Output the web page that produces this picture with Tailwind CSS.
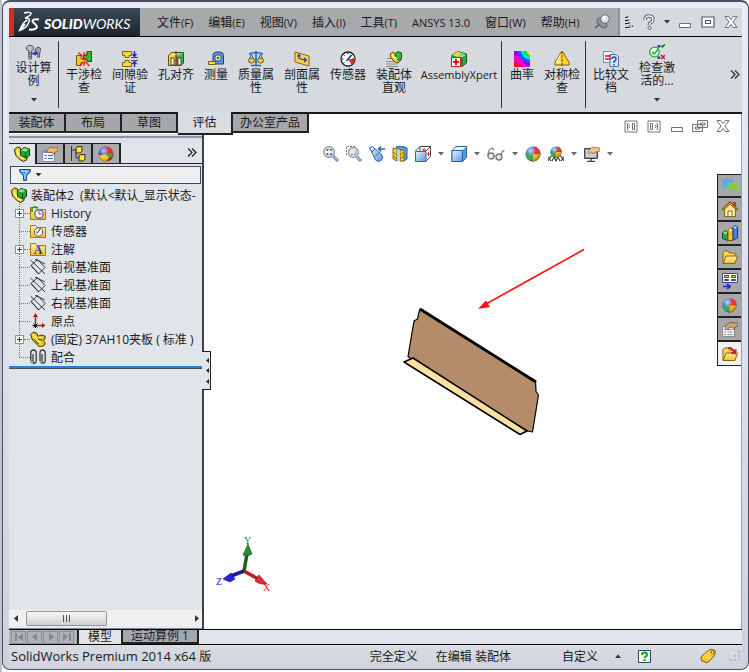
<!DOCTYPE html>
<html lang="zh-CN">
<head>
<meta charset="utf-8">
<title>SolidWorks Premium 2014</title>
<script src="https://cdn.jsdelivr.net/npm/@tailwindcss/browser@4"></script>
</head>
<body class="h-screen overflow-hidden bg-white font-['Open_Sans','Noto_Sans_CJK_SC',sans-serif] text-[12px] leading-[13px] text-[#1a1a1a]">
<svg class="absolute size-0" aria-hidden="true">
  <defs>
    <linearGradient id="gGlass" x1="0" y1="0" x2="1" y2="1"><stop offset="0" stop-color="#eaf4ff"/><stop offset="1" stop-color="#5a96dc"/></linearGradient>
    <linearGradient id="gFolder" x1="0" y1="0" x2="0" y2="1"><stop offset="0" stop-color="#fff3a8"/><stop offset="1" stop-color="#f3bd2c"/></linearGradient>
    <radialGradient id="gShine" cx=".35" cy=".28" r=".75"><stop offset="0" stop-color="#fff" stop-opacity=".75"/><stop offset=".5" stop-color="#fff" stop-opacity="0"/><stop offset="1" stop-color="#000" stop-opacity=".4"/></radialGradient>
  </defs>
  <symbol id="down" viewBox="0 0 6 4"><path d="M0 0h6L3 3.5z" fill="currentColor"/></symbol>
  <symbol id="part" viewBox="0 0 16 16"><path d="M.5 3.500L4 1l3 1.500 1 3 3-1.500 4 1v3l-2 1.500 2 2v2l-3.500 2.500-3-1-6-6z" fill="#e8c31a" stroke="#3c3000"/><path d="M2 4l2.500 1L7 9l4 3.500M8.500 6l3 1" fill="none" stroke="#fff38a" stroke-width="1.500"/><path d="M4.500 8.500l4 4.500M8 8l4 1" stroke="#3c3000" fill="none"/></symbol>
  <symbol id="asm" viewBox="0 0 16 16"><path d="M.5 3.500L3.500 1l3 1 .5 4 3 4 3 1v2.500l-3.500 2-3-1.500-5-5z" fill="#f0cc26" stroke="#2f2500"/><path d="M2.500 4l2 4.500L9.500 13" stroke="#fff7a0" stroke-width="1.500" fill="none"/><path d="M6.500 4.500l3.500-3 5.500 1.500v6.500L12 12l-5.500-2.500z" fill="#23a637" stroke="#064d12"/><path d="M7 4.500L10.200 2l4.300 1.200L11.500 5.500z" fill="#86ec86"/><path d="M11.500 6v5" stroke="#064d12"/></symbol>
  <symbol id="ball" viewBox="0 0 16 16"><circle cx="8" cy="8" r="7.500" fill="#2c6ae0"/><path d="M8 8L9.500.600A7.500 7.500 0 0 1 15.500 8z" fill="#ec2a24"/><path d="M8 8h7.500A7.500 7.500 0 0 1 8 15.500z" fill="#f3b81c"/><path d="M8 8v7.500A7.500 7.500 0 0 1 .5 8z" fill="#2fa944"/><circle cx="8" cy="8" r="7.500" fill="url(#gShine)"/></symbol>
  <symbol id="ball2" viewBox="0 0 16 16"><circle cx="8" cy="8" r="7.500" fill="#e5261c"/><path d="M1 5Q4 0 8 .5q2 4-1 8Q3 10 .6 9z" fill="#2a45d0"/><path d="M.6 9Q4 9.500 7 8l4 3-2 4.500Q3 15.500.6 9z" fill="#f7cf1d"/><path d="M7 8q4-1 8.500 0-.5 2-1.500 4z" fill="#34b03c"/><circle cx="8" cy="8" r="7.500" fill="url(#gShine)"/></symbol>
  <symbol id="prop" viewBox="0 0 16 16"><path d="M.5 4.500h12v11H.5z" fill="#eef2fa" stroke="#8492ad"/><path d="M1 5h11v2H1z" fill="#7d92c8"/><path d="M2.500 9.500h2M2.500 12.500h2M6 9.500h5M6 12.500h5" stroke="#4668b4"/><path d="M4 5l4-3.500 8 .5v3l-3 1-1 3-1.500-3-4 .5-1-1z" fill="#f2b87a" stroke="#895022" stroke-width=".7"/></symbol>
  <symbol id="note" viewBox="0 0 16 16"><path d="M.5 5.500h12v10H.5z" fill="#f0f0f0" stroke="#8a8a8a"/><path d="M2 8.500h2M2 11h2M2 13.500h2M5.500 8.500h5M5.500 11h5M5.500 13.500h5" stroke="#999"/><path d="M3 5l5-3.500L16 2v3l-3 1-1 2.500L10.500 6l-3 .5L6 9 4 8z" fill="#cfa67c" stroke="#6b4424" stroke-width=".7"/></symbol>
  <symbol id="conf" viewBox="0 0 16 16"><path d="M1.500 0v15M1.500 4h5M6 4v8h4" fill="none" stroke="#333"/><path d="M6 2l2-1.500h4V5l-2 2H6zM9 10l2-1.500h4V13l-2 2H9z" fill="#f7d52c" stroke="#3b3000"/><path d="M7 3h3v3M10 11h3v3" fill="none" stroke="#fffbb0"/></symbol>
  <symbol id="funnel" viewBox="0 0 12 12"><path d="M.5.5h11v2L7.500 7v4.500h-3V7L.5 2.500z" fill="#4c9be8" stroke="#134d92"/><path d="M2 2h7L6 5.500V10" stroke="#c8e6ff" fill="none"/></symbol>
  <symbol id="folder" viewBox="0 0 16 16"><path d="M.5 2.500h5l1.500 2h8.500v10H.5z" fill="url(#gFolder)" stroke="#a87708"/></symbol>
  <symbol id="plane" viewBox="0 0 16 16"><path d="M1 6.500L7.500.500 15 8.500 8.500 15zM.5 1l14.500 14M5 0l10 5M1 6.500L9 15" fill="none" stroke="#222" stroke-width=".9"/></symbol>
  <symbol id="origin" viewBox="0 0 16 16"><path d="M5.500 13V2M6 12.500h7" stroke="#b01818" stroke-width="1.400"/><path d="M3 4l2.500-4L8 4zM12 10l3.500 2.500L12 15z" fill="#b01818"/><path d="M3.500 10.500l4 4M3.500 14.500l4-4M2.500 12.500h3v2.500" stroke="#111" fill="none"/></symbol>
  <symbol id="mates" viewBox="0 0 16 16"><path d="M.8 12V4Q1 1 3.500 1T6.200 4v8q0 2-1.500 2T3 12V5M10 12V4q0-3 2.500-3T15.200 4v8q0 2-1.500 2T12 12V5" fill="none" stroke="#3a3a3a" stroke-width="1.300"/><path d="M.8 12q.2 3 3.500 3M10 12q0 3 3 3" stroke="#777" fill="none"/></symbol>
  <symbol id="close" viewBox="0 0 16 16"><path d="M2 2.500h3.700L8 5.500l2.300-3H14L10 8l4 5.500h-3.700L8 10.500l-2.300 3H2L6 8z" fill="#fff" stroke="#6b7079"/></symbol>
  <symbol id="mini" viewBox="0 0 16 16"><path d="M2.500 9.500h11v4h-11z" fill="#fff" stroke="#6b7079"/></symbol>
  <symbol id="bolts" viewBox="0 0 16 16"><path d="M.5 2l2-1.500h4L8 2v3L6 6v9H3V6L.5 5z" fill="#b9bcc2" stroke="#555"/><path d="M3 8h3M3 10h3M3 12h3" stroke="#555"/><path d="M10 4l2-1.500h2L16 4v3l-1.500.8V13h-2V8L10 7z" fill="#9aa0a8" stroke="#555"/><path d="M6 9h5M9 7l2.500 2L9 11" stroke="#1530c8" fill="none" stroke-width="1.500"/></symbol>
  <symbol id="interf" viewBox="0 0 16 16"><path d="M.5 4.500H5v3h4v4H5v3H.5z" fill="#f5c81e" stroke="#7b5900"/><path d="M11 .5h4.500v10H11V8H7.500V4H11z" fill="#2dba3c" stroke="#0b5b15"/><path d="M8 1v4M2.500 1.500l4 4M9.500 5L12 1.500M8 15v-4M4 14.500l3-3.500M13.500 15L9.500 11M6 8h4" stroke="#e31616" stroke-width="1.300"/></symbol>
  <symbol id="clear" viewBox="0 0 16 16"><path d="M.5.5h9v4H7v2H3v-2H.5zM.5 15.500h9v-4H7v-2H3v2H.5z" fill="#ffd73a" stroke="#86620a"/><path d="M9 6.500h7M9 9.500h7" stroke="#444"/><path d="M12.500 0v5M12.500 16v-5M10.500 3l2 2.500 2-2.500M10.500 13l2-2.500 2 2.500" stroke="#1a28c8" fill="none" stroke-width="1.400"/></symbol>
  <symbol id="hole" viewBox="0 0 16 16"><path d="M.5 4.500L4 1.500h11.500V12L13 14.500H.5z" fill="#2eb63c" stroke="#245e10"/><path d="M.5 4.500L4 1.500h4v13H.5z" fill="#f2cf33" stroke="#6a5200"/><path d="M1 4.500L4 2h11l-3 2.500z" fill="#fff" fill-opacity=".4"/><path d="M3 7v7h3V7zM10 7v7h3V7z" fill="#fff" stroke="#444"/><path d="M8 0v16" stroke="#b31212" stroke-dasharray="3 1"/></symbol>
  <symbol id="measure" viewBox="0 0 16 16"><path d="M5 4q0-3 4-3h3q3.500 0 3.500 4v8H5z" fill="#5c98de" stroke="#1b427e"/><path d="M.5 10.500h7v3h-7z" fill="#fbd83c" stroke="#7c5d0b"/><circle cx="10" cy="7" r="3.300" fill="#f6e9a8" stroke="#1b427e"/><circle cx="10" cy="7" r="1.300" fill="#2d62ae"/></symbol>
  <symbol id="mass" viewBox="0 0 16 16"><path d="M8 0v14M1 3q7-3 14 0M3 14.500h10" stroke="#2469c4" stroke-width="1.600" fill="none"/><path d="M3.500 3L1 9h5zM12.500 3L10 9h5z" fill="none" stroke="#2469c4"/><ellipse cx="3.500" cy="9.500" rx="3" ry="2.500" fill="#f5cb45" stroke="#6c5514"/><ellipse cx="12.500" cy="9.500" rx="3" ry="2.500" fill="#f5cb45" stroke="#6c5514"/></symbol>
  <symbol id="section" viewBox="0 0 16 16"><path d="M1 1l14 4v10L1 11z" fill="#f8d447" stroke="#86670e"/><path d="M5 8V4M3.500 5.500L5 3.500l1.500 2M5 7.500l6 1.500M10 7l2.500 2.300L10 11" stroke="#1f35b5" fill="none" stroke-width="1.200"/></symbol>
  <symbol id="gauge" viewBox="0 0 16 16"><circle cx="8" cy="8" r="7" fill="#fff" stroke="#222" stroke-width="1.300"/><path d="M8 8h6.500q0 4-3 5.700z" fill="#e6342a"/><path d="M8 1.500v2M1.500 8h2M3.300 3.300L4.700 4.700M12.700 3.300l-1.400 1.400M3.500 12.500l1-1M14 8h-2" stroke="#222"/><path d="M6.500 10l5-6" stroke="#1745b5" stroke-width="1.800"/></symbol>
  <symbol id="visual" viewBox="0 0 16 16"><path d="M1 7.500h5M0 10.500h9M0 13h11M0 15.500h12" stroke="#888"/><path d="M4 3l3-2 3 2 5 3v3l-3 3-3-1-4-4z" fill="#f4cb2a" stroke="#604b00"/><path d="M9 3l3-2.500 3.500 1.500v5L13 9.500 9 7z" fill="#2fb943" stroke="#0c5818"/><path d="M6 3.500l5 5" stroke="#fff7aa" stroke-width="1.500"/></symbol>
  <symbol id="xpert" viewBox="0 0 16 16"><path d="M1 4l6-3.500 8.500 2.500v9L11 15.500 1 12z" fill="#2cad43" stroke="#0e5a1b"/><path d="M1 4l6-3.500 4 1.500-4 4z" fill="#f4d641"/><path d="M7 6l4-4 4 1.500-4 3z" fill="#7de28a"/><path d="M11 6.500v8" stroke="#0e5a1b"/><path d="M.5 6.500h9v9h-9z" fill="#fff" stroke="#d11515"/><path d="M5 8v6M2 11h6" stroke="#e01414" stroke-width="2"/></symbol>
  <symbol id="rain" viewBox="0 0 16 16"><path d="M0 0h16v16H0z" fill="#1624ff"/><path d="M0 0h7q0 5 9 8v8H0z" fill="#8a00ff"/><path d="M0 5q7-1 9 5t7 4v2H0z" fill="#f0c"/><path d="M0 11q5 0 8 5H0z" fill="#f02"/><path d="M4 0h12v12Q4 9 4 0z" fill="#1060ff"/><path d="M7 0h9v9Q8 7 7 0z" fill="#00e5f0"/><path d="M9.500 0H16v6.500Q10 5 9.500 0z" fill="#10e838"/><path d="M13 0h3v4Q13 3 13 0z" fill="#ffe600"/></symbol>
  <symbol id="symm" viewBox="0 0 16 16"><path d="M8 1q2 0 3 4l4 6v3H1v-3l4-6q1-4 3-4z" fill="#ffd52e" stroke="#8b6200"/><path d="M6.500 4L3 11h4" stroke="#fff7ae" stroke-width="1.500" fill="none"/><path d="M8 0v16" stroke="#6e3900" stroke-dasharray="3 1"/></symbol>
  <symbol id="compare" viewBox="0 0 16 16"><path d="M.5.500h8l2 2v9H.5z" fill="#f5f8fe" stroke="#7a8cae"/><path d="M7 3.500h6l2.500 2.500v9.500H7z" fill="#dce9fc" stroke="#52719f"/><path d="M2 5h6M2 8h6" stroke="#dd1515" stroke-width="1.700"/><path d="M9 8q0-2 2-2t2 2-2 2.500V12M11 13v1.500" stroke="#1848c0" fill="none" stroke-width="1.500"/></symbol>
  <symbol id="active" viewBox="0 0 16 16"><circle cx="5.500" cy="8" r="4.800" fill="#e9ffe9" stroke="#22a844" stroke-width="1.300"/><path d="M3 8l2 2 4-4.500" stroke="#14aa2f" fill="none" stroke-width="1.500"/><path d="M8.500 3.500l2-2M8.500 12.500l2 2M8.500 1.500h2v2M8.500 14.500h2v-2" stroke="#2134c8" stroke-width="1.200" fill="none"/><path d="M12 1.500L13.500 3 16 0" stroke="#087b15" fill="none" stroke-width="1.500"/><path d="M12 11l4 4M16 11l-4 4" stroke="#de1515" stroke-width="1.500"/></symbol>
  <symbol id="pin" viewBox="0 0 16 16"><path d="M7 9l-6 5" stroke="#555" stroke-width="1.400"/><ellipse cx="8" cy="9" rx="3.500" ry="6" transform="rotate(-45 8 9)" fill="#8d929b" stroke="#555a63"/><circle cx="11" cy="5" r="4.300" fill="#d9dde5" stroke="#616773"/><circle cx="10" cy="4" r="2" fill="#fff"/></symbol>
  <symbol id="zoomfit" viewBox="0 0 16 16"><path d="M10 10l5 5" stroke="#3f76b5" stroke-width="3"/><path d="M10 10l4.500 4.500" stroke="#a5cdf2" stroke-width="1.400"/><circle cx="6" cy="6" r="5.300" fill="#e8edf2" stroke="#8f959b" stroke-width="1.400"/><path d="M4 5V3.500h1.500M6.800 3.500h1.500V5M8.300 7v1.500H6.800M5.500 8.500H4V7" stroke="#333" fill="none"/></symbol>
  <symbol id="zoomarea" viewBox="0 0 16 16"><path d="M.5 9V.5h9" stroke="#777" stroke-dasharray="2 1" fill="none"/><path d="M11 11l4 4" stroke="#3f76b5" stroke-width="3"/><path d="M11 11l3.500 3.500" stroke="#a5cdf2" stroke-width="1.400"/><circle cx="7.500" cy="6.500" r="5" fill="#e4e7ea" stroke="#999ea4" stroke-width="1.300"/><path d="M5 8.500h5V4" stroke="#777" stroke-dasharray="2 1" fill="none"/></symbol>
  <symbol id="prev" viewBox="0 0 16 16"><path d="M.5 1.500l3-1L13 9q2 4-1.500 6-3 1-5-1z" fill="url(#gGlass)" stroke="#2c65a8"/><path d="M3 6l3-3M6 10.500l4-4" stroke="#2c65a8"/><path d="M16 3H10M12 .5L9.500 3 12 5.500" stroke="#2b67c0" stroke-width="1.500" fill="none"/></symbol>
  <symbol id="secview" viewBox="0 0 16 16"><path d="M4 1q6-2 11 1v11l-4 2.500V4Q7 5 4 1z" fill="#5b9be2" stroke="#235b9f"/><path d="M1 2l4 1v12l-4-2z" fill="#f8d435" stroke="#8c6500"/><path d="M8 4h4v11H8z" fill="#f8d435" stroke="#8c6500"/><path d="M1 6l4 3M1 10l4 3M8 9l4-3M8 13l4-3" stroke="#8c6500"/><path d="M5 3l3 1v11H5z" fill="#a8d4f8"/></symbol>
  <symbol id="orient" viewBox="0 0 16 16"><path d="M5 .5h10.500v10L11 15M5 .5L.5 5M15.500.500L11 5M5 1v4" fill="none" stroke="#444"/><path d="M.5 5.500H11V15.500H.5z" fill="url(#gGlass)" stroke="#2c65a8"/><path d="M7 4h4M9 2v4M12 8h3M13.500 6v4" stroke="#de2020"/></symbol>
  <symbol id="cube" viewBox="0 0 16 16"><path d="M1 4.500L5 .5h10.500v11L11.500 15.500H1z" fill="#5b98e0" stroke="#2d5e9f"/><path d="M1 4.500h10.500v11H1z" fill="url(#gGlass)" stroke="#2d5e9f"/><path d="M1.500 4L5.500 1H15l-3.500 3z" fill="#e8f3ff"/></symbol>
  <symbol id="glasses" viewBox="0 0 18 16"><circle cx="4" cy="10" r="3" fill="#dfe9f2" stroke="#727a82" stroke-width="1.300"/><circle cx="12" cy="11" r="3" fill="#dfe9f2" stroke="#727a82" stroke-width="1.300"/><path d="M7 10h2M1 10Q1 3 5 2l2 2M14.500 9q0-5 3-4" fill="none" stroke="#727a82" stroke-width="1.200"/></symbol>
  <symbol id="scene" viewBox="0 0 16 16"><path d="M0 15l3-5h10l3 5M0 11l3 4M16 11l-3 4M4 15l2-4 2 4 2-4 2 4" stroke="#444" fill="none" stroke-width="1.200"/><svg x="2" width="12" height="12"><use href="#ball"/></svg></symbol>
  <symbol id="viewset" viewBox="0 0 16 16"><path d="M.5 2.500h13v10H.5z" fill="#8d959f" stroke="#444"/><path d="M2 4h10v7H2z" fill="#c9d2dc"/><path d="M7 13v2M3 15.500h8" stroke="#444" stroke-width="1.400"/><path d="M4 6l4-5 8 1v3l-4 1-3 2-1-2-3 2z" fill="#f3c38c" stroke="#9a5f28" stroke-width=".7"/></symbol>
  <symbol id="chat" viewBox="0 0 16 16"><path d="M0 1h11v8H5l-3 3V9H0z" fill="#5aaee6"/><path d="M6 5h10v7h-1v3l-3-3H6z" fill="#8ccc3c"/></symbol>
  <symbol id="home" viewBox="0 0 16 16"><path d="M11 1h3v5h-3z" fill="#c33"/><path d="M2.500 8v7.500h11V8L8 3z" fill="#fbe79a" stroke="#8b6a14"/><path d="M.5 9L8 1.500 15.500 9" fill="none" stroke="#7a3b08" stroke-width="2"/><path d="M1 8.500L8 2l7 6.500" fill="none" stroke="#f2bd2d"/><path d="M6 15v-5h4v5" fill="#fff" stroke="#8b6a14"/></symbol>
  <symbol id="books" viewBox="0 0 16 16"><path d="M.5 8l3-2 2.500 2v7.500l-5.500-2z" fill="#27a84b" stroke="#08501c"/><path d="M1 8l2.500-1.500L5.500 8 4 9z" fill="#a7ecb4"/><path d="M6 5l2.500-2L11 4.500v11H6z" fill="#f6c52e" stroke="#7f5906"/><path d="M6.500 5L8.500 3.500 10.500 5 9 6z" fill="#fff4b8"/><path d="M11 2.500l2-2 2.500 1.500v11l-4.500 2z" fill="#4285e0" stroke="#153c80"/><path d="M11.500 3L13 1l2 1.500-1.500 1z" fill="#c9e0fb"/></symbol>
  <symbol id="open" viewBox="0 0 16 16"><path d="M1 14V3.500L2.500 2H6l1.500 2H13v3" fill="#f8d662" stroke="#8d6206"/><path d="M1 14.500L4 7h11.500L13 14.500z" fill="url(#gFolder)" stroke="#8d6206"/></symbol>
  <symbol id="palette" viewBox="0 0 16 16"><path d="M.5.5h15v9H.5z" fill="#f5f6fa" stroke="#3b4a76"/><path d="M2.500 2.500h4v2h-4zM9.500 2.500h4v2h-4zM2.500 6.500h4v1h-4zM9.500 6.500h4v1h-4z" fill="#f3c936" stroke="#3b4a76"/><path d="M1 13.500h6M5 11l3 2.500L5 16" stroke="#1a28d0" fill="none" stroke-width="1.700"/></symbol>
  <symbol id="reload" viewBox="0 0 16 16"><use href="#open"/><path d="M6 2q4-1 6 4M9 6.500l4 1 1-4" stroke="#d01818" fill="none" stroke-width="1.800"/></symbol>
</svg>

<div class="flex h-full border-l-2 border-[#bfc3cb] pb-[2px]">
<div class="flex min-w-0 flex-1 flex-col rounded-lg border border-t-2 border-[#4b4e5e] bg-gradient-to-b from-[#e9ebf5] via-[#dde0ed] to-[#cdd1df] px-[6px] pt-[6px] pb-[2px]">

  <header class="flex h-[29px] shrink-0 border-b border-black bg-[#a8a9ab]">
    <div class="flex w-[131px] shrink-0 items-center border-l-[5px] border-[#dc2b1e] bg-gradient-to-b from-[#3d4a55] to-[#1b252e] text-white">
      <svg class="ml-[4px] h-[22px] w-[22px]" viewBox="0 0 22 22" fill="none" stroke="#fff" stroke-width="1.500"><path d="M6 2q7-1.500 7 .5 0 2-6 4.500 6 0 4 4Q8 18 1.500 19.500q4-9 8-10.500M1.500 19.500Q5 17 7 13"/><path d="M21 8.500q-6-1-6.500 1.500 0 1 3 3.500 3 3-.5 4.500-3 1-6 .5" stroke-width="2"/></svg>
      <span class="ml-[4px] pt-[2px] font-['Lato'] text-[14px] italic"><b class="font-black">SOLID</b>WORKS</span>
    </div>
    <nav class="flex min-w-0 flex-1 items-center gap-[15px] pl-[17px] text-[12px]" aria-label="菜单">
      <button class="shrink-0">文件<span class="text-[11px]">(F)</span></button><button class="shrink-0">编辑<span class="text-[11px]">(E)</span></button><button class="shrink-0">视图<span class="text-[11px]">(V)</span></button><button class="shrink-0">插入<span class="text-[11px]">(I)</span></button><button class="shrink-0">工具<span class="text-[11px]">(T)</span></button><button class="shrink-0 text-[11px]">ANSYS 13.0</button><button class="shrink-0">窗口<span class="text-[11px]">(W)</span></button><button class="shrink-0">帮助<span class="text-[11px]">(H)</span></button>
      <button class="shrink-0" aria-label="固定菜单"><svg class="size-4"><use href="#pin"/></svg></button>
    </nav>
    <div class="flex shrink-0 items-center gap-[7px] border-l-2 border-[#8e9196] bg-[#d6d9dd] pr-[3px] pl-[5px]">
      <button class="flex w-[9px] justify-end overflow-hidden">毛.</button>
      <button aria-label="帮助"><svg class="size-4" viewBox="0 0 16 16"><path d="M4 6q0-4 4-4t4 3.500q0 2-2 3T8.500 11" fill="none" stroke="#5e636c" stroke-width="3.400"/><path d="M4 6q0-4 4-4t4 3.500q0 2-2 3T8.500 11" fill="none" stroke="#fff" stroke-width="1.300"/><circle cx="8.500" cy="14" r="1.500" fill="#fff" stroke="#5e636c"/></svg></button>
      <button aria-label="帮助选项"><svg class="h-1 w-[6px] text-[#333]"><use href="#down"/></svg></button>
      <button aria-label="最小化"><svg class="size-4"><use href="#mini"/></svg></button>
      <button aria-label="最大化"><svg class="size-4" viewBox="0 0 16 16"><path d="M2 3h12v10H2zM5.500 6.500h5v3h-5z" fill="#fff" stroke="#555a63" stroke-width="1.200"/></svg></button>
      <button aria-label="关闭"><svg class="size-4"><use href="#close"/></svg></button>
    </div>
  </header>

  <section class="flex h-[77px] shrink-0 items-stretch border-b-2 border-[#16181b] bg-[#d6d9de] py-[4px] leading-[13px]" aria-label="评估工具">
    <button class="flex w-[50px] shrink-0 flex-col items-center border-r border-[#333] pt-[4px]"><svg class="mb-[1px] size-[15px]"><use href="#bolts"/></svg><span class="w-[36px]">设计算例</span><svg class="mt-[11px] h-1 w-[6px] text-[#333]"><use href="#down"/></svg></button>
    <div class="flex border-r border-[#333] pl-[2px]">
      <button class="flex w-[46px] flex-col items-center pt-[10px]"><svg class="mb-[1px] size-4"><use href="#interf"/></svg><span class="w-[36px]">干涉检查</span></button>
      <button class="flex w-[46px] flex-col items-center pt-[10px]"><svg class="mb-[1px] size-4"><use href="#clear"/></svg><span class="w-[36px]">间隙验证</span></button>
      <button class="flex w-[46px] flex-col items-center pt-[10px]"><svg class="mb-[1px] size-4"><use href="#hole"/></svg><span>孔对齐</span></button>
      <button class="flex w-[34px] flex-col items-center pt-[10px]"><svg class="mb-[1px] size-4"><use href="#measure"/></svg><span>测量</span></button>
      <button class="flex w-[46px] flex-col items-center pt-[10px]"><svg class="mb-[1px] size-4"><use href="#mass"/></svg><span class="w-[36px]">质量属性</span></button>
      <button class="flex w-[46px] flex-col items-center pt-[10px]"><svg class="mb-[1px] size-4"><use href="#section"/></svg><span class="w-[36px]">剖面属性</span></button>
      <button class="flex w-[46px] flex-col items-center pt-[10px]"><svg class="mb-[1px] size-4"><use href="#gauge"/></svg><span>传感器</span></button>
      <button class="flex w-[46px] flex-col items-center pt-[10px]"><svg class="mb-[1px] size-4"><use href="#visual"/></svg><span class="w-[36px]">装配体直观</span></button>
      <button class="flex w-[84px] flex-col items-center pt-[10px]"><svg class="mb-[1px] size-4"><use href="#xpert"/></svg><span class="text-[11px]">AssemblyXpert</span></button>
    </div>
    <div class="flex border-r border-[#333] pl-[3px]">
      <button class="flex w-[34px] flex-col items-center pt-[10px]"><svg class="mb-[1px] size-4"><use href="#rain"/></svg><span>曲率</span></button>
      <button class="flex w-[46px] flex-col items-center pt-[10px]"><svg class="mb-[1px] size-4"><use href="#symm"/></svg><span class="w-[36px]">对称检查</span></button>
    </div>
    <button class="ml-[2px] flex w-[46px] shrink-0 flex-col items-center pt-[10px]"><svg class="mb-[1px] size-4"><use href="#compare"/></svg><span class="w-[36px]">比较文档</span></button>
    <button class="flex w-[46px] shrink-0 flex-col items-center pt-[3px]"><svg class="mb-[1px] size-4"><use href="#active"/></svg><span class="w-[37px]">检查激活的...</span><svg class="mt-[11px] h-1 w-[6px] text-[#333]"><use href="#down"/></svg></button>
    <button class="ml-auto pr-[2px]" aria-label="更多工具"><svg class="h-[9px] w-[10px]" viewBox="0 0 10 9" fill="none" stroke="#333" stroke-width="1.300"><path d="M1 .5l4 4-4 4M5 .5l4 4-4 4"/></svg></button>
  </section>

  <div class="flex h-[20px] shrink-0 bg-white">
    <div class="flex" role="tablist" aria-label="命令管理器">
      <button role="tab" class="h-[19px] w-[57px] border-r-2 border-b-2 border-[#222] bg-[#a5a7aa]">装配体</button>
      <button role="tab" class="h-[19px] w-[56px] border-r-2 border-b-2 border-[#222] bg-[#a5a7aa]">布局</button>
      <button role="tab" class="h-[19px] w-[56px] border-r-2 border-b-2 border-[#222] bg-[#a5a7aa]">草图</button>
      <button role="tab" aria-selected="true" class="relative z-10 -mt-[2px] h-[23px] w-[55px] border-r-2 border-b-2 border-[#222] bg-[#d9dce1]">评估</button>
      <button role="tab" class="h-[19px] w-[76px] border-r-2 border-b-2 border-[#222] bg-[#a5a7aa]">办公室产品</button>
    </div>
    <div class="flex flex-1 items-end justify-end gap-[7px] border-r border-[#9aa0ab] pr-[10px]">
      <button aria-label="左侧窗格"><svg class="size-4" viewBox="0 0 16 16" fill="none" stroke="#70757d"><path d="M2 3h12v11H2zM5.500 5.500H4.500v6h1M9.500 5.500h2v6h-2z"/><path d="M7 7L5.500 8.500 7 10"/></svg></button>
      <button aria-label="右侧窗格"><svg class="size-4" viewBox="0 0 16 16" fill="none" stroke="#70757d"><path d="M2 3h12v11H2zM10.500 5.500h1v6h-1M4.500 5.500h2v6h-2z"/><path d="M9 7l1.500 1.500L9 10"/></svg></button>
      <button aria-label="最小化文档"><svg class="size-4"><use href="#mini"/></svg></button>
      <button aria-label="还原文档"><svg class="size-4" viewBox="0 0 16 16" fill="#fff" stroke="#70757d"><path d="M5.500 2.500h10v7h-10zM8 5h5v2H8zM.5 6.500h10v7H.5zM3 9h5v2H3z"/></svg></button>
      <button aria-label="关闭文档"><svg class="size-4"><use href="#close"/></svg></button>
    </div>
  </div>

  <div class="flex min-h-0 flex-1">
    <aside class="relative flex w-[195px] shrink-0 flex-col border-r-2 border-[#3a4150] bg-[#e1e5ea]">
      <div class="h-[9px] shrink-0 bg-[#dcdfe8]"><div class="h-[4px] border-b-2 border-[#8d93a3]"></div></div>
      <div class="flex h-[21px] shrink-0 items-end border-b border-[#222]">
        <button class="-mb-px flex h-[21px] w-[28px] items-center justify-center border-t border-r-2 border-[#222] bg-[#e1e5ea]" aria-label="设计树"><svg class="size-4"><use href="#asm"/></svg></button>
        <button class="flex h-[20px] w-[28px] items-center justify-center border-t border-r-2 border-[#222] bg-[#a8aaad]" aria-label="属性"><svg class="size-4"><use href="#prop"/></svg></button>
        <button class="flex h-[20px] w-[28px] items-center justify-center border-t border-r-2 border-[#222] bg-[#a8aaad]" aria-label="配置"><svg class="size-4"><use href="#conf"/></svg></button>
        <button class="flex h-[20px] w-[28px] items-center justify-center border-t border-r-2 border-[#222] bg-[#a8aaad]" aria-label="外观"><svg class="size-4"><use href="#ball2"/></svg></button>
        <button class="mr-[5px] mb-[6px] ml-auto" aria-label="展开窗格"><svg class="h-[9px] w-[10px]" viewBox="0 0 10 9" fill="none" stroke="#222" stroke-width="1.300"><path d="M1 .5l4 4-4 4M5 .5l4 4-4 4"/></svg></button>
      </div>
      <div class="mx-px mt-[2px] flex h-[18px] shrink-0 items-center border border-[#444b57] bg-[#f0f0f0] pl-[8px]">
        <button class="flex items-center gap-[4px]" aria-label="过滤器"><svg class="size-3"><use href="#funnel"/></svg><svg class="h-1 w-[7px] text-[#333]"><use href="#down"/></svg></button>
        <input class="h-full min-w-0 flex-1 bg-transparent px-1 outline-none" type="text" aria-label="过滤">
      </div>
      <ul class="mt-[2px] flex shrink-0 flex-col overflow-hidden whitespace-nowrap" role="tree">
        <li class="flex h-[18px] items-center gap-[4px] pl-[2px]" role="treeitem"><svg class="size-4 shrink-0"><use href="#asm"/></svg><span>装配体2 &nbsp;(默认&lt;默认_显示状态-</span></li>
        <li role="none"><ul class="relative" role="group">
          <li class="absolute top-0 bottom-[9px] left-[10px] border-l border-dotted border-[#777]" role="none"></li>
          <li class="relative flex h-[18px] items-center pl-[6px]" role="treeitem"><button class="flex size-[9px] items-center justify-center border border-[#8b93a2] bg-white" aria-label="展开"><svg class="size-[5px]" viewBox="0 0 5 5"><path d="M0 2.500h5M2.500 0v5" stroke="#24408e"/></svg></button><i class="w-[6px] border-t border-dotted border-[#777]"></i><svg class="mr-[5px] size-4"><use href="#folder"/><circle cx="9" cy="9" r="4.200" fill="#fff" stroke="#3764b4" stroke-width="1.300"/><path d="M9 6v3h2.500" stroke="#d02020" fill="none"/><path d="M2 7V3q3-2 6 0" stroke="#159a30" fill="none" stroke-width="1.600"/></svg>History</li>
          <li class="relative flex h-[18px] items-center pl-[10px]" role="treeitem"><i class="w-[11px] border-t border-dotted border-[#777]"></i><svg class="mr-[5px] size-4"><use href="#folder"/><circle cx="8.500" cy="9" r="4.200" fill="#fff" stroke="#555"/><path d="M7 10.500l3-4M9 6v1M6 9h1" stroke="#333"/></svg>传感器</li>
          <li class="relative flex h-[18px] items-center pl-[6px]" role="treeitem"><button class="flex size-[9px] items-center justify-center border border-[#8b93a2] bg-white" aria-label="展开"><svg class="size-[5px]" viewBox="0 0 5 5"><path d="M0 2.500h5M2.500 0v5" stroke="#24408e"/></svg></button><i class="w-[6px] border-t border-dotted border-[#777]"></i><span class="relative mr-[5px] flex size-4 items-center justify-center"><svg class="absolute inset-0 size-4"><use href="#folder"/></svg><b class="relative pt-[2px] font-['Liberation_Serif'] text-[12px] leading-none text-[#1736b5]">A</b></span>注解</li>
          <li class="relative flex h-[18px] items-center pl-[10px]" role="treeitem"><i class="w-[11px] border-t border-dotted border-[#777]"></i><svg class="mr-[5px] size-4"><use href="#plane"/></svg>前视基准面</li>
          <li class="relative flex h-[18px] items-center pl-[10px]" role="treeitem"><i class="w-[11px] border-t border-dotted border-[#777]"></i><svg class="mr-[5px] size-4"><use href="#plane"/></svg>上视基准面</li>
          <li class="relative flex h-[18px] items-center pl-[10px]" role="treeitem"><i class="w-[11px] border-t border-dotted border-[#777]"></i><svg class="mr-[5px] size-4"><use href="#plane"/></svg>右视基准面</li>
          <li class="relative flex h-[18px] items-center pl-[10px]" role="treeitem"><i class="w-[11px] border-t border-dotted border-[#777]"></i><svg class="mr-[5px] size-4"><use href="#origin"/></svg>原点</li>
          <li class="relative flex h-[18px] items-center pl-[6px]" role="treeitem"><button class="flex size-[9px] items-center justify-center border border-[#8b93a2] bg-white" aria-label="展开"><svg class="size-[5px]" viewBox="0 0 5 5"><path d="M0 2.500h5M2.500 0v5" stroke="#24408e"/></svg></button><i class="w-[6px] border-t border-dotted border-[#777]"></i><svg class="mr-[5px] size-4 shrink-0"><use href="#part"/></svg>(固定) 37AH10夹板 ( 标准 )</li>
          <li class="relative flex h-[18px] items-center pl-[10px]" role="treeitem"><i class="w-[11px] border-t border-dotted border-[#777]"></i><svg class="mr-[5px] size-4"><use href="#mates"/></svg>配合</li>
        </ul></li>
      </ul>
      <div class="h-[3px] shrink-0 border-b border-[#454f5e] bg-[#2b7fd6]"></div>
      <div class="mt-auto flex h-[16px] shrink-0 items-center bg-[#f0f0f0] pr-[3px] pl-[5px]">
        <button aria-label="向左滚动"><svg class="h-[7px] w-1" viewBox="0 0 4 7"><path d="M4 0v7L0 3.500z" fill="#333"/></svg></button>
        <div class="ml-[8px] flex h-[15px] w-[81px] items-center justify-center gap-[2px] rounded-xs border border-[#92969c] bg-gradient-to-b from-[#f7f7f7] to-[#cfd0d2]"><i class="h-[7px] w-px bg-[#555]"></i><i class="h-[7px] w-px bg-[#555]"></i><i class="h-[7px] w-px bg-[#555]"></i></div>
        <button class="ml-auto" aria-label="向右滚动"><svg class="h-[7px] w-1" viewBox="0 0 4 7"><path d="M0 0v7l4-3.500z" fill="#333"/></svg></button>
      </div>
      <div class="h-[3px] shrink-0 border-b border-[#8289a0] bg-[#e8eaf0]"></div>
      <button class="absolute top-[217px] -right-[9px] z-10 flex h-[39px] w-[9px] flex-col items-end justify-evenly border border-l-0 border-[#222] bg-[#e1e5ea] pr-px" aria-label="折叠窗格"><svg class="h-[5px] w-[3px]" viewBox="0 0 3 5"><path d="M3 0v5L0 2.500z" fill="#222"/></svg><svg class="h-[5px] w-[3px]" viewBox="0 0 3 5"><path d="M3 0v5L0 2.500z" fill="#222"/></svg><svg class="h-[5px] w-[3px]" viewBox="0 0 3 5"><path d="M3 0v5L0 2.500z" fill="#222"/></svg></button>
    </aside>

    <main class="relative flex min-w-0 flex-1 flex-col border-r border-[#9aa0ab] bg-white">
      <svg class="absolute inset-0 size-full" viewBox="204 133 537 495" role="img" aria-label="夹板模型">
        <path d="M420 308l115.500 72 .5 10.500 2.500 3.500-6 37-5-1-115-71-4.500-3.500 6-35.500 3.500-2 1-5z" fill="#b48c6a" stroke="#000" stroke-width="1.200" stroke-linejoin="round"/>
        <path d="M420 308l116 73" stroke="#000" stroke-width="2.800"/>
        <path d="M404 361l9-4 114 73-7 3.500z" fill="#fbe1a0" stroke="#000" stroke-width="1.500" stroke-linejoin="round"/>
        <path d="M584 248.500L486 303" stroke="#fe1010" stroke-width="1.600"/><path d="M478 308l8-8.500 4 6.500z" fill="#fe1010"/>
        <path d="M244 570l3-17" stroke="#17631c" stroke-width="3.500"/><path d="M243 554l5-11 4 10q-4 3-9 1z" fill="#2c8a36" stroke="#0f4d16" stroke-width=".6"/>
        <path d="M244 570l14 8" stroke="#c01a1a" stroke-width="3.500"/><path d="M255 580l4-6 8 9q-7 1-12-3z" fill="#e03030" stroke="#7d1010" stroke-width=".6"/>
        <path d="M244 570l-13 5" stroke="#1b1b95" stroke-width="3.500"/><path d="M223 578l8-6 4 6-5 3z" fill="#2626dc" stroke="#11116b" stroke-width=".6"/>
        <g font-family="Liberation Serif" font-size="10"><text x="244" y="543" fill="#118822">Y</text><text x="216" y="584" fill="#2020e0">Z</text><text x="263" y="590" fill="#e01818">X</text></g>
      </svg>
      <div class="relative flex items-center justify-center gap-[7px] pt-[12px] pr-[9px] text-[#666]">
        <button aria-label="整屏显示"><svg class="size-4"><use href="#zoomfit"/></svg></button>
        <button aria-label="局部放大"><svg class="size-4"><use href="#zoomarea"/></svg></button>
        <button aria-label="上一视图"><svg class="size-4"><use href="#prev"/></svg></button>
        <button aria-label="剖面视图"><svg class="size-4"><use href="#secview"/></svg></button>
        <button class="flex items-center gap-[7px]" aria-label="视图定向"><svg class="size-4"><use href="#orient"/></svg><svg class="h-1 w-[6px]"><use href="#down"/></svg></button>
        <button class="flex items-center gap-[7px]" aria-label="显示样式"><svg class="size-4"><use href="#cube"/></svg><svg class="h-1 w-[6px]"><use href="#down"/></svg></button>
        <button class="flex items-center gap-[7px]" aria-label="隐藏/显示"><svg class="h-4 w-[18px]"><use href="#glasses"/></svg><svg class="h-1 w-[6px]"><use href="#down"/></svg></button>
        <button aria-label="编辑外观"><svg class="size-4"><use href="#ball"/></svg></button>
        <button class="flex items-center gap-[7px]" aria-label="应用布景"><svg class="size-4"><use href="#scene"/></svg><svg class="h-1 w-[6px]"><use href="#down"/></svg></button>
        <button class="flex items-center gap-[7px]" aria-label="视图设定"><svg class="size-4"><use href="#viewset"/></svg><svg class="h-1 w-[6px]"><use href="#down"/></svg></button>
      </div>
      <div class="relative mt-[12px] flex w-[24px] flex-col self-end border-l border-[#222]" role="tablist" aria-label="任务窗格">
        <button class="flex h-[24px] items-center justify-center border-t border-b-2 border-[#222] bg-[#a5a7aa]" aria-label="论坛"><svg class="size-4"><use href="#chat"/></svg></button>
        <button class="flex h-[24px] items-center justify-center border-b-2 border-[#222] bg-[#a5a7aa]" aria-label="资源"><svg class="size-4"><use href="#home"/></svg></button>
        <button class="flex h-[24px] items-center justify-center border-b-2 border-[#222] bg-[#a5a7aa]" aria-label="设计库"><svg class="size-4"><use href="#books"/></svg></button>
        <button class="flex h-[24px] items-center justify-center border-b-2 border-[#222] bg-[#a5a7aa]" aria-label="文件探索器"><svg class="size-4"><use href="#open"/></svg></button>
        <button class="flex h-[24px] items-center justify-center border-b-2 border-[#222] bg-[#a5a7aa]" aria-label="视图调色板"><svg class="size-4"><use href="#palette"/></svg></button>
        <button class="flex h-[24px] items-center justify-center border-b-2 border-[#222] bg-[#a5a7aa]" aria-label="外观和布景"><svg class="size-[15px]"><use href="#ball"/></svg></button>
        <button class="flex h-[24px] items-center justify-center border-b-2 border-[#222] bg-[#a5a7aa]" aria-label="自定义属性"><svg class="size-4"><use href="#note"/></svg></button>
        <button class="flex h-[24px] items-center justify-center border-b border-[#222] bg-[#eef0f2]" aria-label="恢复"><svg class="size-4"><use href="#reload"/></svg></button>
      </div>
    </main>
  </div>

  <div class="flex h-[16px] shrink-0 border-y border-black bg-[#e1e5ea]">
    <div class="flex items-center gap-px bg-[#b0b2b5] pr-[3px] pl-[2px]">
      <button class="flex h-[13px] w-[15px] items-center justify-center border border-[#8d9094]" aria-label="第一个"><svg class="size-2" viewBox="0 0 8 8" fill="#85888c"><path d="M0 0h2v8H0zM8 0v8L3 4z"/></svg></button>
      <button class="flex h-[13px] w-[15px] items-center justify-center border border-[#8d9094]" aria-label="上一个"><svg class="size-2" viewBox="0 0 8 8" fill="#85888c"><path d="M6 0v8L1 4z"/></svg></button>
      <button class="flex h-[13px] w-[15px] items-center justify-center border border-[#8d9094]" aria-label="下一个"><svg class="size-2" viewBox="0 0 8 8" fill="#85888c"><path d="M2 0v8l5-4z"/></svg></button>
      <button class="flex h-[13px] w-[15px] items-center justify-center border border-[#8d9094]" aria-label="最后一个"><svg class="size-2" viewBox="0 0 8 8" fill="#85888c"><path d="M6 0h2v8H6zM0 0v8l5-4z"/></svg></button>
    </div>
    <button class="w-[46px] border-x-2 border-[#222] bg-[#e1e5ea] leading-[12px]">模型</button>
    <button class="w-[76px] border-r-2 border-b-2 border-[#222] bg-[#a5a7aa] leading-[10px]">运动算例 1</button>
  </div>

  <footer class="flex h-[22px] shrink-0 items-center bg-gradient-to-b from-[#dadce2] to-[#d0d4df] pl-[2px]">
    <span class="text-[13px]">SolidWorks Premium 2014 x64 <span class="text-[12px]">版</span></span>
    <span class="ml-auto">完全定义</span>
    <span class="ml-[18px]">在编辑 装配体</span>
    <button class="ml-[51px] flex items-center gap-[17px]">自定义<svg class="h-1 w-[6px]" viewBox="0 0 6 4"><path d="M0 4h6L3 .500z" fill="#333"/></svg></button>
    <button class="ml-[17px]" aria-label="快速提示"><svg class="size-[13px]" viewBox="0 0 13 13"><path d="M.5.5h12v12H.5z" fill="#f5fff5" stroke="#234c6c"/><path d="M4 5q0-2.500 2.500-2.500T9 4.500q0 1-1 1.700T6.500 8M6.500 9v2" fill="none" stroke="#11a022" stroke-width="2"/></svg></button>
    <button class="ml-[49px]" aria-label="标签"><svg class="size-4" viewBox="0 0 16 16"><path d="M1 10q0-1 1-2l7-6q1-1 3-.5l3 1q.5 3-.5 5l-6 6.500q-1 1-2.500.5l-4-1.500q-1-1-1-3z" fill="#f5bd28" stroke="#8d5b00"/><path d="M3 9l7-6M5 11l5-5M7 12l4-4" stroke="#fff0a0"/><circle cx="12.500" cy="4" r="1.300" fill="#fff" stroke="#8d5b00"/></svg></button>
    <svg class="mr-[2px] ml-[14px] size-[10px]" viewBox="0 0 10 10" fill="#b4b8c3"><path d="M8 0h2v2H8zM8 4h2v2H8zM8 8h2v2H8zM4 4h2v2H4zM4 8h2v2H4zM0 8h2v2H0z"/></svg>
  </footer>
</div>
</div>
</body>
</html>
